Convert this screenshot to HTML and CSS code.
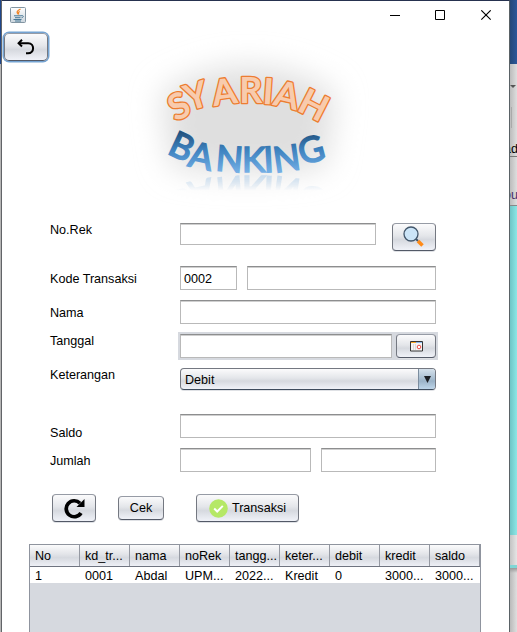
FILE: index.html
```html
<!DOCTYPE html>
<html lang="id">
<head>
<meta charset="utf-8">
<title>Syariah Banking</title>
<link rel="stylesheet" href="styles.css">
</head>
<body>
<div class="edge-left"></div>
<main class="window">
  <header class="titlebar">
    <svg class="java" width="16" height="16" viewBox="0 0 16 16"><defs><linearGradient id="jg" x2="0" y2="1"><stop stop-color="#fff"/><stop offset="1" stop-color="#cbd5dd"/></linearGradient></defs><rect x=".5" y=".5" width="15" height="15" rx="1" fill="url(#jg)" stroke="#8295a2"/><path d="M10.500 2C7 4 6 5 8.300 7.200M9.800 4.500C7.800 5.500 8 6 9 7.500" fill="none" stroke="#f18425" stroke-width="1.300"/><path d="M4 8.800h7M5 10.700h5.500M3.500 12.500h8M5 14h6M11 8.800c3-.8 3 1.500.5 2" fill="none" stroke="#477896" stroke-width="1"/></svg>
    <svg class="caption" width="104" height="12" viewBox="0 0 104 12" fill="none" stroke="#000"><path d="M0 5.500h10M45.500.5h9v9h-9z"/><path d="M91.300.300l9.400 9.400M100.700.300l-9.400 9.400" stroke-width="1.100"/></svg>
  </header>
  <button class="btn back"><svg width="18" height="16" viewBox="0 0 18 16" fill="none" stroke="#000" stroke-width="2"><path d="M2 4.200h9.200C18 4.500 17.500 14.300 11 14.300H9"/><path d="M5 .8L1.600 4.200 5 7.500"/></svg></button>
  <svg class="logo" width="245" height="155" viewBox="-90 -30 735 465">
    <defs>
      <linearGradient id="blue" gradientUnits="userSpaceOnUse" x1="0" y1="212" x2="0" y2="340"><stop stop-color="#1f4e79"/><stop offset=".45" stop-color="#3e82bf"/><stop offset=".75" stop-color="#5b9bd5"/><stop offset="1" stop-color="#78b1e6"/></linearGradient>
      <linearGradient id="fade" gradientUnits="userSpaceOnUse" x1="0" y1="343" x2="0" y2="392"><stop stop-color="#fff" stop-opacity=".35"/><stop offset="1" stop-color="#fff" stop-opacity="0"/></linearGradient>
      <mask id="reflect" maskUnits="userSpaceOnUse" x="0" y="343" width="560" height="70"><rect x="0" y="343" width="560" height="70" fill="url(#fade)"/></mask>
      <filter id="soft" x="-40%" y="-40%" width="180%" height="180%"><feGaussianBlur stdDeviation="46"/></filter>
    </defs>
    <path class="glow" filter="url(#soft)" d="M20 100Q280-60 540 100L510 320Q280 360 50 320z"/>
    <text class="orange" x="61 101 176 253 321 351 422" y="185 154 139 128 131 134 150" rotate="-25 -17 -8 0 4 13 27">SYARIAH</text>
    <text id="banking" class="blue" x="34 96 180 261 328 360 441" y="279 317 331 337 337 338 315" rotate="25 12 5 0 -3 -8 -15">BANKING</text>
    <g mask="url(#reflect)"><use href="#banking" transform="translate(0 686) scale(1 -1)"/></g>
  </svg>
  <section class="form">
    <div class="row account"><label>No.Rek</label><span class="field w196"></span><button class="btn search"><svg width="22" height="22" viewBox="0 0 22 22"><path d="M13 13l2 2" stroke="#42566b" stroke-width="2"/><path d="M15 15l4.500 4.500" stroke="#ff8a17" stroke-width="3.500"/><circle cx="8" cy="8" r="7" fill="#cbe4f7" stroke="#42566b" stroke-width="1.300"/></svg></button></div>
    <div class="row code"><label>Kode Transaksi</label><span class="field w57">0002</span><span class="field w189"></span></div>
    <div class="row name"><label>Nama</label><span class="field w256"></span></div>
    <div class="row date"><label>Tanggal</label><span class="picker"><span class="field w212"></span><button class="btn cal"><svg width="13" height="11" viewBox="0 0 13 11"><path d="M.5.5h12v9.500H.5z" fill="#f5f5f5" stroke="#353535"/><path d="M1 1.500h5" stroke="#f6a623"/><path d="M6 1.500h6" stroke="#8db8e8"/><path d="M3.500 3v6M5.500 3v6" stroke="#ccc" stroke-width=".6"/><circle cx="9" cy="6" r="1.800" fill="#fff" stroke="#ee4c45"/></svg></button></span></div>
    <div class="row kind"><label>Keterangan</label><span class="combo"><span>Debit</span><i><svg width="7" height="7" viewBox="0 0 7 7"><path d="M0 0h7L3.500 7z" fill="#1c1f24"/></svg></i></span></div>
    <div class="row balance"><label>Saldo</label><span class="field w256"></span></div>
    <div class="row amount"><label>Jumlah</label><span class="field w131"></span><span class="field w115"></span></div>
  </section>
  <section class="actions">
    <button class="btn refresh"><svg width="21" height="21" viewBox="0 0 21 21"><path d="M16 5.200A8 8 0 1 0 17 15" fill="none" stroke="#000" stroke-width="3.700"/><path d="M20.500 1v8h-8z"/></svg></button>
    <button class="btn check">Cek</button>
    <button class="btn submit"><svg width="19" height="19" viewBox="0 0 19 19"><circle cx="9.500" cy="9.500" r="9.300" fill="#b5e866"/><path d="M5.200 9.500l3 3 5.600-5.600" fill="none" stroke="#fff" stroke-width="2"/></svg>Transaksi</button>
  </section>
  <section class="table">
    <div class="thead"><span>No</span><span>kd_tr...</span><span>nama</span><span>noRek</span><span>tangg...</span><span>keter...</span><span>debit</span><span>kredit</span><span>saldo</span></div>
    <div class="trow"><span>1</span><span>0001</span><span>Abdal</span><span>UPM...</span><span>2022...</span><span>Kredit</span><span>0</span><span>3000...</span><span>3000...</span></div>
  </section>
</main>
<aside class="behind">
  <div class="blue-bar"></div>
  <div class="ribbon"><i class="drop"></i><i class="rule"></i><span class="ad">ad</span><span class="ou">ou</span></div>
  <div class="page"></div>
  <div class="status"></div>
  <div class="line"></div>
  <div class="desk"></div>
</aside>
</body>
</html>
```

FILE: styles.css
```css
* { box-sizing: border-box; }
body {
  margin: 0;
  width: 517px;
  height: 632px;
  display: flex;
  overflow: hidden;
  background: #fff;
  color: #000;
  font: 12.6px/16px "Liberation Sans", Arial, sans-serif;
}
svg { display: block; flex: none; }
.edge-left {
  width: 2px;
  background: linear-gradient(#1f478b 64px, #b5b5b5 64px);
  border-right: 1px solid #626468;
}
.window {
  width: 508px;
  height: 632px;
  border-top: 1px solid #26324f;
  border-right: 1px solid #5a6266;
  background: #fff;
  display: flex;
  flex-direction: column;
  flex: none;
}
.titlebar {
  height: 30px;
  flex: none;
  display: flex;
  justify-content: space-between;
  padding: 6px 15px 0 8px;
}
.caption { margin-top: 3px; }
.btn {
  display: flex;
  align-items: center;
  justify-content: center;
  flex: none;
  margin: 0;
  padding: 0;
  font: inherit;
  color: #000;
  border: 1px solid #747881;
  border-top-color: #969ba5;
  border-bottom-color: #535967;
  border-radius: 4px;
  background: linear-gradient(#fbfbfc, #e4e6ea 45%, #d6d9df 60%, #f0f2f8);
  box-shadow: 0 1px 0 #dfe1e5;
}
.back {
  width: 44px;
  height: 28px;
  margin: 2px 0 0 2px;
  border-radius: 5px;
  box-shadow: 0 0 0 1.5px #74a3d2;
}
.logo {
  margin: -11px 0 0 123px;
  overflow: visible;
}
.glow { fill: #dfdfdf; }
.orange {
  font: 700 108px Lato, sans-serif;
  fill: #f8cbad;
  stroke: #ed7d31;
  stroke-width: 8px;
  stroke-linejoin: round;
  paint-order: stroke;
}
.blue {
  font: 400 106px Lato, sans-serif;
  fill: url(#blue);
  stroke: url(#blue);
  stroke-width: 5px;
}
.form {
  width: 388px;
  margin: 18px 0 0 48px;
  flex: none;
}
.row { display: flex; align-items: flex-start; }
.row label { width: 130px; flex: none; }
.field {
  height: 24px;
  flex: none;
  border: 1px solid #b9b9b9;
  border-top-color: #8d8e8f;
  box-shadow: inset 0 1px 0 #cfcfcf;
  background: #fff;
  padding: 4px 3px 0;
}
.w57 { width: 57px; }
.w115 { width: 115px; }
.w131 { width: 131px; }
.w189 { width: 189px; }
.w196 { width: 196px; }
.w212 { width: 212px; }
.w256 { width: 256px; }
.account { height: 43px; }
.account .field { height: 22px; }
.account label { margin-top: -1px; }
.search { width: 44px; height: 28px; margin-left: 16px; }
.code { height: 34px; }
.code label { margin-top: 5px; }
.code .w189, .amount .w115 { margin-left: 10px; }
.name { height: 32px; }
.name label { margin-top: 5px; }
.date { height: 36px; }
.date label { margin-top: 1px; }
.picker {
  display: flex;
  gap: 4px;
  padding: 2px;
  margin: 0 -2px;
  background: #d6d9df;
}
.cal { width: 40px; height: 24px; }
.kind { height: 46px; }
.kind label { margin-top: -1px; }
.combo {
  width: 256px;
  height: 22px;
  display: flex;
  justify-content: space-between;
  border: 1px solid #747881;
  border-bottom-color: #3e4c5d;
  border-radius: 4px;
  background: linear-gradient(#fbfbfc, #e4e6ea 45%, #d6d9df 60%, #f0f2f8);
  box-shadow: 0 1px 0 #dfe1e5;
  overflow: hidden;
}
.combo > span { padding: 3px 0 0 4px; }
.combo i {
  width: 17px;
  display: flex;
  align-items: center;
  justify-content: center;
  border-left: 1px solid #7b8d9f;
  background: linear-gradient(#d5e1eb, #a6bccf 50%, #9bb3c8 60%, #bed6ea);
}
.balance { height: 34px; }
.balance label { margin-top: 11px; }
.amount { height: 46px; }
.amount label { margin-top: 5px; }
.actions {
  display: flex;
  align-items: center;
  height: 28px;
  margin-left: 50px;
  flex: none;
}
.refresh { width: 44px; height: 28px; }
.check { width: 46px; height: 24px; margin-left: 22px; }
.submit { width: 103px; height: 28px; margin-left: 32px; gap: 4px; }
.table {
  width: 452px;
  margin: 22px 0 0 27px;
  flex: 1;
  background: #d6d9df;
  border: 1px solid #8f949e;
  border-bottom: 0;
}
.thead, .trow { display: grid; grid-template-columns: repeat(9, 50px); }
.thead {
  height: 22px;
  border-bottom: 1px solid #6f7480;
  background: linear-gradient(#fbfbfc, #e2e4e8 45%, #d6d9df 60%, #eef0f6);
}
.thead span {
  padding: 3px 0 0 5px;
  border-right: 1px solid #9599a2;
}
.trow { height: 16px; background: #fff; }
.trow span { padding: 1px 0 0 5px; }
.behind {
  width: 7px;
  height: 632px;
  display: flex;
  flex-direction: column;
  overflow: hidden;
  flex: none;
}
.blue-bar { height: 64px; flex: none; background: linear-gradient(90deg, #244878, #2b579a); }
.ribbon {
  height: 142px;
  flex: none;
  background: linear-gradient(90deg, #bcbcbc, #dedede);
  border-bottom: 1px solid #888;
  display: flex;
  flex-direction: column;
}
.ribbon span { margin-left: -6px; height: 16px; }
.drop { margin: 21px 0 0 0; border: 3px solid transparent; border-top-color: #555; width: 0; height: 6px; }
.rule { width: 1px; height: 21px; margin: 16px 0 0 1px; background: #aaa; }
.ad { margin-top: 13px; border-bottom: 1px solid #777; }
.ou { margin-top: 30px; color: #49306c; }
.page { height: 329px; flex: none; background: linear-gradient(90deg, #6fc5c6, #8ce7e6); }
.status { height: 30px; flex: none; background: linear-gradient(90deg, #c3c3c3, #e5e5e5); }
.line { height: 3px; flex: none; background: #80d6d5; }
.desk { flex: 1; background: linear-gradient(#999, transparent 5px), linear-gradient(90deg, #bababa, #dfdfdf); }
```
